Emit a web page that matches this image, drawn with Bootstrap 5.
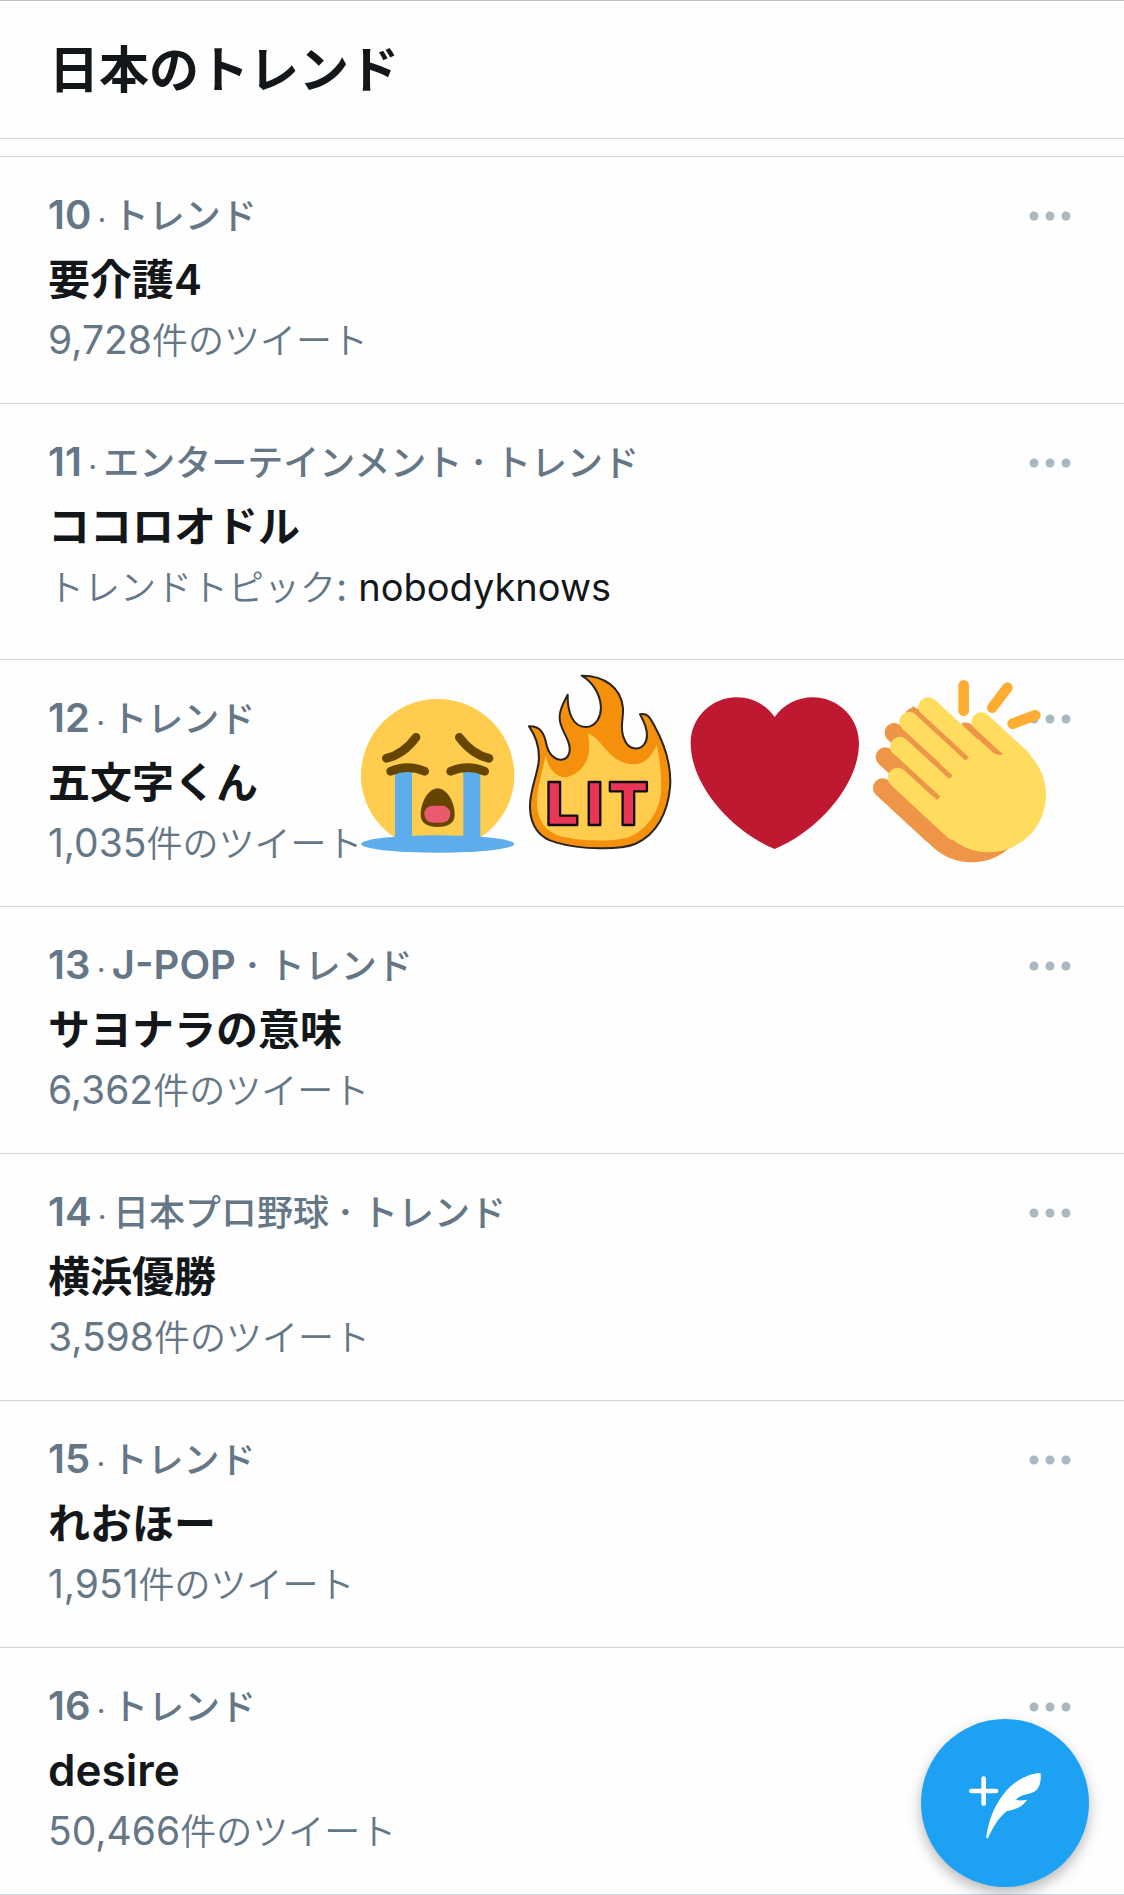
<!DOCTYPE html>
<html lang="ja">
<head>
<meta charset="utf-8">
<meta name="viewport" content="width=device-width, initial-scale=1">
<title>日本のトレンド</title>
<link href="https://cdn.jsdelivr.net/npm/bootstrap@5.3.0/dist/css/bootstrap.min.css" rel="stylesheet">
<style>
body { font-family: Inter, "Noto Sans CJK JP", sans-serif; color: #14171a; background: #fefefe; }
.page-head { border-top: 1px solid #bcc0c6; border-bottom: 1px solid #ccd6dd; padding: 29px 49px 28px; margin-bottom: 17px; }
.page-head h1 { font-size: 50px; line-height: 80px; font-weight: 700; }
.trend { border-top: 1px solid #ccd6dd; padding: 37px 49px 40px 48px; }
.trend-topic { padding-bottom: 49px; }
.trend:last-child { border-bottom: 1px solid #ccd6dd; }
.trend-meta { font-size: 36px; line-height: 44px; font-weight: 500; color: #657786; margin-bottom: 18px; }
.rank, .sep { font-size: 40px; line-height: 1; font-weight: 600; }
.trend-meta .dot { font-size: 26px; line-height: 1; font-weight: 600; }
.trend-name { font-size: 42px; line-height: 48px; font-weight: 600; margin-bottom: 15px; }
.trend-name a { color: inherit; }
.trend-name .en { font-size: 44px; line-height: 1; }
.trend-count { font-size: 36px; line-height: 44px; font-weight: 350; color: #657786; }
.trend-count a { color: #14171a; font-size: 38px; line-height: 1; font-weight: 400; }
.latin { font-size: 39px; line-height: 1; font-weight: 400; }
.more { height: 44px; width: 50px; color: #aab8c2; }
.hashflags { left: 355px; top: 0; pointer-events: none; }
.hashflags svg { height: 210px; }
.fab { right: 35px; bottom: 8px; width: 168px; height: 168px; background: #1da1f2; box-shadow: 0 6px 14px rgba(0,0,0,.28); }
.fab:hover { background: #1991da; }
</style>
<script src="https://cdn.jsdelivr.net/npm/bootstrap@5.3.0/dist/js/bootstrap.bundle.min.js"></script>
</head>
<body>
<svg class="d-none" xmlns="http://www.w3.org/2000/svg"><symbol id="dots" viewBox="0 0 42 10"><g fill="currentColor"><circle cx="5" cy="5" r="4.5"/><circle cx="21" cy="5" r="4.5"/><circle cx="37" cy="5" r="4.5"/></g></symbol></svg>
<header class="page-head"><h1 class="mb-0">日本のトレンド</h1></header>
<main>
<article class="trend">
  <div class="d-flex justify-content-between"><div class="trend-meta"><span class="rank">10</span><span class="dot"> · </span>トレンド</div><button class="more btn p-0 border-0 d-flex align-items-center justify-content-center" aria-label="もっと見る"><svg width="42" height="10"><use href="#dots"/></svg></button></div>
  <h2 class="trend-name"><a class="text-decoration-none" href="#">要介護4</a></h2>
  <div class="trend-count"><span class="latin">9,728</span>件のツイート</div>
</article>
<article class="trend trend-topic">
  <div class="d-flex justify-content-between"><div class="trend-meta"><span class="rank">11</span><span class="dot"> · </span>エンターテインメント<span class="sep"> · </span>トレンド</div><button class="more btn p-0 border-0 d-flex align-items-center justify-content-center" aria-label="もっと見る"><svg width="42" height="10"><use href="#dots"/></svg></button></div>
  <h2 class="trend-name"><a class="text-decoration-none" href="#">ココロオドル</a></h2>
  <div class="trend-count">トレンドトピック<span class="latin">: </span><a class="text-decoration-none" href="#">nobodyknows</a></div>
</article>
<article class="trend position-relative">
  <div class="d-flex justify-content-between"><div class="trend-meta"><span class="rank">12</span><span class="dot"> · </span>トレンド</div><button class="more btn p-0 border-0 d-flex align-items-center justify-content-center" aria-label="もっと見る"><svg width="42" height="10"><use href="#dots"/></svg></button></div>
  <h2 class="trend-name"><a class="text-decoration-none" href="#">五文字くん</a></h2>
  <div class="trend-count"><span class="latin">1,035</span>件のツイート</div>
  <div class="hashflags position-absolute d-flex" aria-hidden="true">
    <svg width="160" viewBox="45 0 480 630">
      <path d="M164 532C104 491 63 424 63 347A230 230 0 0 1 523 347C523 424 482 491 422 532Z" fill="#ffcc4d"/>
      <path d="M165 325H216V540H165ZM370 325H421V540H370Z" fill="#5dadec"/>
      <ellipse cx="293" cy="552" rx="230" ry="26" fill="#5dadec"/>
      <g fill="none" stroke="#664500" stroke-width="26" stroke-linecap="round"><path d="M139 295Q190 283 228 232"/><path d="M447 295Q396 283 358 232"/><path d="M152 334Q203 312 254 334"/><path d="M332 334Q383 312 434 334"/></g>
      <path d="M293 385C265 385 242 428 242 463C242 491 262 501 293 501S344 491 344 463C344 428 321 385 293 385Z" fill="#664500"/>
      <rect x="253" y="437" width="78" height="51" rx="25" fill="#ea596e"/>
    </svg>
    <svg width="170" viewBox="0 0 510 630">
      <path d="M42 199C78 198 88 222 94 252C100 282 119 300 140 299C163 296 170 270 159 243C148 216 129 190 135 160C139 137 151 119 158 104C157 158 174 201 212 201C244 201 261 167 257 134C253 98 231 65 200 47C267 46 319 83 324 145C326 176 312 207 330 243C342 268 371 273 387 254C407 229 390 190 375 163C397 158 405 173 417 195C449 253 471 313 465 383C458 457 426 523 360 552C316 570 199 570 122 547C77 535 43 500 45 435C46 388 65 351 71 306C75 263 64 230 42 199Z" fill="#f4900c" stroke="#292322" stroke-width="6" stroke-linejoin="round"/>
      <path d="M92 286C99 328 126 353 153 352C206 338 235 293 218 220C264 234 278 313 361 313C397 310 414 279 425 254C435 300 441 352 438 398C433 451 398 511 337 533C282 546 199 544 136 529C88 511 65 480 66 420C68 370 83 337 92 286Z" fill="#ffcc4d"/>
      <text x="92 213 280" y="494" font-family="Inter, sans-serif" font-weight="900" font-size="176" fill="#ea3655" stroke="#0e0c0c" stroke-width="7" stroke-linejoin="round">LIT</text>
    </svg>
    <svg width="185" viewBox="15 0 555 630">
      <path d="M284 171C259 135 216 112 170 112C94 112 32 174 32 250C32 372 151 512 284 567C417 512 537 372 537 250C537 174 475 112 399 112C352 112 309 135 284 171Z" fill="#be1931"/>
    </svg>
    <svg width="185" viewBox="30 0 555 630">
      <g stroke="#ee9547" fill="none" stroke-width="58" stroke-linecap="round"><path d="M162 172L309 308M103 218L250 354M76 291L223 427M68 384L219 523"/><path d="M320 207L400 281" stroke-width="38"/></g>
      <circle cx="335" cy="435" r="172" fill="#ee9547"/>
      <g stroke="#ffdb5e" fill="none" stroke-width="60" stroke-linecap="round"><path d="M205 142L390 313M148 185L350 371M120 260L320 444M113 353L284 511M364 187L484 298"/></g>
      <circle cx="386" cy="405" r="172" fill="#ffdb5e"/>
      <path d="M155 143L322 297M112 204L273 352M98 288L236 415" stroke="#ee9547" stroke-width="14"/>
      <path d="M304 190Q322 182 339 200L408 264Q418 275 430 282Q422 290 400 279Z" fill="#ee9547"/>
      <g stroke="#ffac33" stroke-width="32" stroke-linecap="round"><path d="M311 76V152M442 83L397 143M526 166L458 191"/></g>
    </svg>
  </div>
</article>
<article class="trend">
  <div class="d-flex justify-content-between"><div class="trend-meta"><span class="rank">13</span><span class="dot"> · </span><span class="sep">J-POP · </span>トレンド</div><button class="more btn p-0 border-0 d-flex align-items-center justify-content-center" aria-label="もっと見る"><svg width="42" height="10"><use href="#dots"/></svg></button></div>
  <h2 class="trend-name"><a class="text-decoration-none" href="#">サヨナラの意味</a></h2>
  <div class="trend-count"><span class="latin">6,362</span>件のツイート</div>
</article>
<article class="trend">
  <div class="d-flex justify-content-between"><div class="trend-meta"><span class="rank">14</span><span class="dot"> · </span>日本プロ野球<span class="sep"> · </span>トレンド</div><button class="more btn p-0 border-0 d-flex align-items-center justify-content-center" aria-label="もっと見る"><svg width="42" height="10"><use href="#dots"/></svg></button></div>
  <h2 class="trend-name"><a class="text-decoration-none" href="#">横浜優勝</a></h2>
  <div class="trend-count"><span class="latin">3,598</span>件のツイート</div>
</article>
<article class="trend">
  <div class="d-flex justify-content-between"><div class="trend-meta"><span class="rank">15</span><span class="dot"> · </span>トレンド</div><button class="more btn p-0 border-0 d-flex align-items-center justify-content-center" aria-label="もっと見る"><svg width="42" height="10"><use href="#dots"/></svg></button></div>
  <h2 class="trend-name"><a class="text-decoration-none" href="#">れおほー</a></h2>
  <div class="trend-count"><span class="latin">1,951</span>件のツイート</div>
</article>
<article class="trend">
  <div class="d-flex justify-content-between"><div class="trend-meta"><span class="rank">16</span><span class="dot"> · </span>トレンド</div><button class="more btn p-0 border-0 d-flex align-items-center justify-content-center" aria-label="もっと見る"><svg width="42" height="10"><use href="#dots"/></svg></button></div>
  <h2 class="trend-name"><a class="en text-decoration-none" href="#">desire</a></h2>
  <div class="trend-count"><span class="latin">50,466</span>件のツイート</div>
</article>
</main>
<button class="fab btn rounded-circle border-0 p-0 position-fixed" aria-label="ツイートする">
  <svg class="d-block" width="168" height="168" viewBox="93 117 504 504" fill="#fff"><path d="M281 296V371M244 333H318" stroke="#fff" stroke-width="14" stroke-linecap="round"/><path d="M452 280C454 303 449 321 439 331C423 345 391 342 378 359C388 363 399 361 411 359C398 382 374 388 351 393C327 411 309 442 294 474Q288 477 289 468C297 415 318 366 351 330C378 301 412 283 446 279Q452 278 452 280Z"/></svg>
</button>
</body>
</html>
